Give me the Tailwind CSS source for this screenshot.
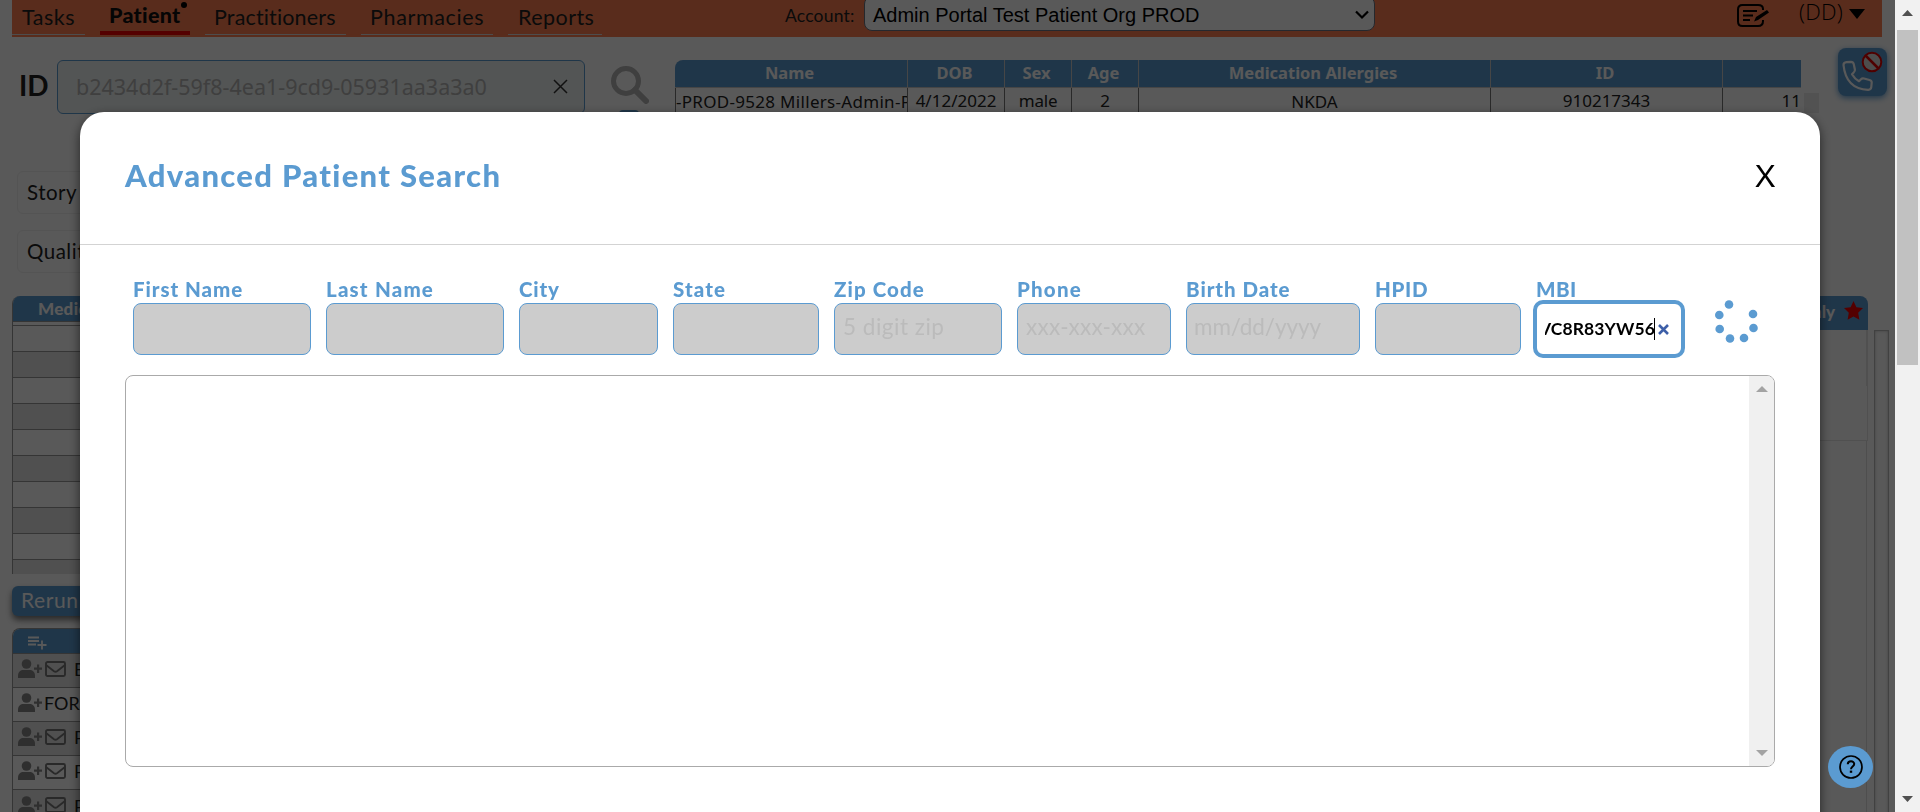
<!DOCTYPE html>
<html lang="en">
<head>
<meta charset="utf-8">
<title>Advanced Patient Search</title>
<script src="https://cdn.jsdelivr.net/npm/@tailwindcss/browser@4"></script>
</head>
<body class="relative h-[812px] w-[1920px] overflow-hidden bg-white font-['Lato',sans-serif] text-[#222] [font-variant-ligatures:none]">
<svg class="hidden">
  <symbol id="person" viewBox="0 0 24 20"><circle cx="8.5" cy="5" r="4.8"/><path d="M0 19v-2.500C0 13 2.500 11 5.500 11h6c3 0 5.500 2 5.500 5.500V19z"/><path d="M19 5.500h2.200v3.100h3v2.200h-3v3.100H19v-3.100h-3V8.600h3z"/></symbol>
  <symbol id="mail" viewBox="0 0 21 16"><rect x="1" y="1" width="19" height="14" rx="1.500" fill="none" stroke="currentColor" stroke-width="1.900"/><path d="M1 4l8 6.200q1.500 1 3 0L20 4" fill="none" stroke="currentColor" stroke-width="1.900"/></symbol>
</svg>

<div class="flex h-[812px] w-[1895px] flex-col overflow-hidden">
  <header class="ml-3 flex h-[37px] w-[1870px] shrink-0 items-start bg-[#ff7f50] text-[21.5px]">
    <nav class="flex h-[35px] gap-[15px] leading-[35px]">
      <a class="w-[73px] border-b border-[#ddd] pl-[10px] tracking-[0.5px]">Tasks</a>
      <a class="relative w-[90px] border-b-4 border-[#f00000] pl-[9px] text-[21.5px] font-black leading-[31px] tracking-[0.3px] text-[#111]">Patient<i class="absolute left-[81px] top-[2px] size-[6px] rounded-full bg-black"></i></a>
      <a class="w-[141px] border-b border-[#ddd] pl-[9px] tracking-[0.15px]">Practitioners</a>
      <a class="w-[132px] border-b border-[#ddd] pl-[9px] tracking-[0.65px]">Pharmacies</a>
      <a class="w-[94px] border-b border-[#ddd] pl-[10px] tracking-[0.45px]">Reports</a>
    </nav>
    <span class="ml-[183px] w-[79px] text-[17.5px] leading-[32px] tracking-[0.2px]">Account:</span>
    <div class="-mt-1 flex h-[35px] w-[511px] items-center justify-between rounded-lg border border-gray-500 bg-white pb-[1px] pl-[8px] pr-[5px] pt-1 font-['Liberation_Sans',sans-serif] text-[20px] text-black">
      <span>Admin Portal Test Patient Org PROD</span>
      <svg class="size-[14px]" viewBox="0 0 14 14" fill="none" stroke="currentColor" stroke-width="2.200"><path d="M1 3.500l6 6 6-6"/></svg>
    </div>
    <svg class="ml-[361px] mt-[3px] h-[25px] w-[34px] text-black" viewBox="0 0 34 25" fill="none" stroke="currentColor" stroke-width="2"><path d="M27 7V6q0-4-5-4H6.500Q2 2 2 6.500v12Q2 23 6.500 23H22q5 0 5-5v-1"/><path d="M7 8h14M7 12.500h10M7 17h7"/><path d="M18 18.500l2-4.500L31 7l2 2.500L22 17z" fill="currentColor" stroke="none"/></svg>
    <span class="ml-[29px] font-['Open_Sans',sans-serif] text-[22px] font-light leading-[22px] tracking-[0.2px] text-black">(DD)</span>
    <svg class="ml-[6px] mt-[9px] h-[10px] w-[16px] shrink-0 text-black" viewBox="0 0 16 10"><path d="M0 0h16L8 10z"/></svg>
  </header>

  <section class="mt-[11px] flex h-[123px] shrink-0 items-start">
    <b class="ml-[19px] mt-[11px] w-[38px] pt-[6px] text-[28px] leading-[40px]">ID</b>
    <div class="mt-[12px] flex h-[54px] w-[528px] items-center justify-between rounded-md border border-[#5b9bd1] bg-[#eef3f2] pl-[18px] pr-[16px] font-['Noto_Sans',sans-serif] text-[21.5px] text-[#b5b5b5]">
      <span>b2434d2f-59f8-4ea1-9cd9-05931aa3a3a0</span>
      <svg class="mb-[2px] size-[15px] text-[#333]" viewBox="0 0 15 15" stroke="currentColor" stroke-width="1.500"><path d="M1 1l13 13M14 1L1 14"/></svg>
    </div>
    <div class="ml-[24px] mt-[17px] flex w-[40px] flex-col items-center">
      <svg class="size-[39px]" viewBox="0 0 39 39" fill="none" stroke="#b4b4b4"><circle cx="16" cy="16" r="12.500" stroke-width="5"/><path d="M25 25l11 11" stroke-width="6" stroke-linecap="round"/></svg>
      <div class="mt-[6px] h-[10px] w-[20px] rounded-t bg-[#5b9bd1]"></div>
    </div>
    <div class="ml-[26px] mt-[12px] grid w-[1126px] grid-cols-[233px_97px_67px_67px_352px_232px_78px] overflow-hidden rounded-tl-lg text-center font-['Noto_Sans',sans-serif] text-[17px]">
      <div class="h-[28px] border-b border-r border-[#c8c8c8] bg-[#5b9bd1] pr-[3px] text-[16.500px] font-bold leading-[26px] text-white">Name</div>
      <div class="h-[28px] border-b border-r border-[#c8c8c8] bg-[#5b9bd1] pr-[3px] text-[16.500px] font-bold leading-[26px] text-white">DOB</div>
      <div class="h-[28px] border-b border-r border-[#c8c8c8] bg-[#5b9bd1] pr-[3px] text-[16.500px] font-bold leading-[26px] text-white">Sex</div>
      <div class="h-[28px] border-b border-r border-[#c8c8c8] bg-[#5b9bd1] pr-[3px] text-[16.500px] font-bold leading-[26px] text-white">Age</div>
      <div class="h-[28px] border-b border-r border-[#c8c8c8] bg-[#5b9bd1] pr-[3px] text-[16.500px] font-bold leading-[26px] text-white">Medication Allergies</div>
      <div class="h-[28px] border-b border-r border-[#c8c8c8] bg-[#5b9bd1] pr-[3px] text-[16.500px] font-bold leading-[26px] text-white">ID</div>
      <div class="h-[28px] border-b border-[#c8c8c8] bg-[#5b9bd1]"></div>
      <div class="h-[28px] overflow-hidden whitespace-nowrap border-x border-[#777] text-left leading-[27px] tracking-[0.300px]">-PROD-9528 Millers-Admin-P</div>
      <div class="h-[28px] border-r border-[#777] leading-[26px]">4/12/2022</div>
      <div class="h-[28px] border-r border-[#777] leading-[26px] tracking-[-0.2px]">male</div>
      <div class="h-[28px] border-r border-[#777] leading-[26px]">2</div>
      <div class="h-[28px] border-r border-[#777] leading-[27px]">NKDA</div>
      <div class="h-[28px] border-r border-[#777] leading-[26px]">910217343</div>
      <div class="h-[28px] text-right leading-[26px]">11</div>
    </div>
    <div class="ml-[3px] mt-[45px] h-[20px] w-[15px] bg-[#ebebeb]"></div>
    <div class="ml-[19px] flex h-[48px] w-[49px] shrink-0 rounded-lg bg-[#5b9bd1] shadow-[0_2px_6px_#5b9bd1]">
      <svg class="h-[48px] w-[49px]" viewBox="0 0 49 48" fill="none"><path d="M5.500 17q0-2.500 3-2.800l4.500-.4q2.200 0 2.700 2.200l1.200 5.500q.3 1.800-1.200 3l-1.700 1.700q2.500 4.500 7 7l2-2q1.200-1.200 3-.7l5.500 1.500q2.200.6 2.200 2.500l-.4 4.500q-.3 3-3.300 2.800Q8 41 5.500 17z" stroke="#fff" stroke-width="2.200" stroke-linejoin="round"/><circle cx="34" cy="14" r="9.300" fill="#ddd" stroke="#e00000" stroke-width="2"/><path d="M27.500 7.500l13 13" stroke="#e00000" stroke-width="2.500"/></svg>
    </div>
  </section>

  <main class="flex w-[1895px] grow justify-between">
    <div class="flex w-[300px] flex-col">
      <div class="ml-[17px] h-[43px] shrink-0 rounded-md border border-[#f0f0f0] pl-[9px] text-[20.500px] leading-[40px] tracking-[0.5px]">Story</div>
      <div class="ml-[17px] mt-4 h-[43px] shrink-0 rounded-md border border-[#f0f0f0] pl-[9px] text-[20.500px] leading-[40px] tracking-[0.5px]">Quality</div>
      <div class="ml-3 mt-[23px] flex h-[278px] shrink-0 flex-col overflow-hidden rounded-tl-lg border-l border-[#999]">
        <div class="h-[26px] shrink-0 border-b border-[#999] bg-[#5b9bd1] pl-[25px] text-[17px] font-black leading-[26px] tracking-[0.3px] text-white">Medications</div>
        <div class="h-1 shrink-0 border-b border-[#999]"></div>
        <div class="h-[26px] shrink-0 border-b border-[#999]"></div>
        <div class="h-[26px] shrink-0 border-b border-[#999] bg-[#e4e4e4]"></div>
        <div class="h-[26px] shrink-0 border-b border-[#999]"></div>
        <div class="h-[26px] shrink-0 border-b border-[#999] bg-[#e4e4e4]"></div>
        <div class="h-[26px] shrink-0 border-b border-[#999]"></div>
        <div class="h-[26px] shrink-0 border-b border-[#999] bg-[#e4e4e4]"></div>
        <div class="h-[26px] shrink-0 border-b border-[#999]"></div>
        <div class="h-[26px] shrink-0 border-b border-[#999] bg-[#e4e4e4]"></div>
        <div class="h-[26px] shrink-0 border-b border-[#999]"></div>
        <div class="h-[26px] shrink-0 bg-[#e4e4e4]"></div>
      </div>
      <div class="ml-3 mt-3 h-[30px] w-[180px] shrink-0 rounded-md bg-[#5b9bd1] pl-[9px] text-[21px] leading-[28px] tracking-[0.6px] text-white shadow-[0_4px_6px_#777]">Rerun</div>
      <div class="ml-3 mt-3 shrink-0 overflow-hidden rounded-tl-lg border-l border-t border-[#999] text-[18px] leading-[34px]">
        <div class="h-[25px] border-b border-[#999] bg-[#5b9bd1] pl-[15px] pt-[7px]"><svg class="h-[14px] w-[19px]" viewBox="0 0 19 14" stroke="#fff" stroke-width="1.800"><path d="M0 1.500h11M0 5h11M0 8.500h8M14 4.500v9M9.500 9h9"/></svg></div>
        <div class="flex h-[34px] items-center border-b border-[#999] bg-[#e4e4e4] pl-[5px]"><svg class="mt-[-3px] h-5 w-6 fill-[#888]"><use href="#person"/></svg><svg class="ml-[3px] mt-[-4px] h-4 w-[21px] text-[#777]"><use href="#mail"/></svg><span class="mb-[3px] ml-[8px]">Enroll</span></div>
        <div class="flex h-[34px] items-center border-b border-[#999] pl-[5px]"><svg class="mt-[-3px] h-5 w-6 fill-[#888]"><use href="#person"/></svg><span class="mb-[3px] ml-[2px]">FORM</span></div>
        <div class="flex h-[34px] items-center border-b border-[#999] bg-[#e4e4e4] pl-[5px]"><svg class="mt-[-3px] h-5 w-6 fill-[#888]"><use href="#person"/></svg><svg class="ml-[3px] mt-[-4px] h-4 w-[21px] text-[#777]"><use href="#mail"/></svg><span class="mb-[3px] ml-[8px]">Patient</span></div>
        <div class="flex h-[34px] items-center border-b border-[#999] pl-[5px]"><svg class="mt-[-3px] h-5 w-6 fill-[#888]"><use href="#person"/></svg><svg class="ml-[3px] mt-[-4px] h-4 w-[21px] text-[#777]"><use href="#mail"/></svg><span class="mb-[3px] ml-[8px]">Patient</span></div>
        <div class="flex h-[34px] items-center bg-[#e4e4e4] pl-[5px]"><svg class="mt-[-3px] h-5 w-6 fill-[#888]"><use href="#person"/></svg><svg class="ml-[3px] mt-[-4px] h-4 w-[21px] text-[#777]"><use href="#mail"/></svg><span class="mb-[3px] ml-[8px]">Patient</span></div>
      </div>
    </div>
    <div class="mr-[6px] mt-[125px] flex gap-[6px]">
      <div class="flex w-[168px] flex-col">
        <div class="flex h-[34px] items-center justify-end gap-[9px] rounded-tr-lg bg-[#5b9bd1] pr-[5px] text-[17px] font-black text-white"><span class="mb-[2px]">Only</span><svg class="mb-[5px] size-[19px]" viewBox="0 0 19 19" fill="#f00000"><path d="M9.500 0l2.900 6.200 6.600.9-4.800 4.700 1.200 6.900-5.900-3.300-5.900 3.300 1.200-6.900L0 7.100l6.600-.9z"/></svg></div>
        <div class="h-[56px] border-r-2 border-[#e4e4e4]"></div>
        <div class="h-[55px] border-b border-r border-[#e4e4e4]"></div>
        <div class="mr-px grow border-r border-[#e0e0e0]"></div>
      </div>
      <div class="mt-[34px] w-[15px] border-x border-t border-[#bbb] shadow-[inset_0_0_3px_#bbb]"></div>
    </div>
  </main>
</div>

<div class="fixed left-0 top-0 h-[812px] w-[1895px] bg-black/65"></div>

<div class="fixed left-[80px] top-[112px] flex h-[720px] w-[1740px] flex-col rounded-t-3xl bg-white shadow-[0_4px_12px_rgba(0,0,0,0.600)]">
  <div class="flex h-[133px] shrink-0 items-center justify-between border-b border-[#d3d3d3] px-[45px] pb-[5px]">
    <h1 class="text-[31px] font-black tracking-[1.320px] text-[#5b9bd1]">Advanced Patient Search</h1>
    <span class="origin-right scale-x-110 font-['Noto_Sans',sans-serif] text-[31px] text-black">X</span>
  </div>
  <div class="flex h-[130px] shrink-0 pl-[53px] pt-[33px] text-[20.500px] tracking-[0.300px] text-[#5b9bd1]">
    <div class="mr-[15px] w-[178px]"><b class="block h-[25px] font-black leading-[22px] tracking-[0.950px]">First Name</b><div class="h-[52px] rounded-lg border border-[#5b9bd1] bg-[#ccc]"></div></div>
    <div class="mr-[15px] w-[178px]"><b class="block h-[25px] font-black leading-[22px] tracking-[1.200px]">Last Name</b><div class="h-[52px] rounded-lg border border-[#5b9bd1] bg-[#ccc]"></div></div>
    <div class="mr-[15px] w-[139px]"><b class="block h-[25px] font-black leading-[22px] tracking-[0.800px]">City</b><div class="h-[52px] rounded-lg border border-[#5b9bd1] bg-[#ccc]"></div></div>
    <div class="mr-[15px] w-[146px]"><b class="block h-[25px] font-black leading-[22px] tracking-[1.100px]">State</b><div class="h-[52px] rounded-lg border border-[#5b9bd1] bg-[#ccc]"></div></div>
    <div class="mr-[15px] w-[168px]"><b class="block h-[25px] font-black leading-[22px] tracking-[1.100px]">Zip Code</b><div class="h-[52px] rounded-lg border border-[#5b9bd1] bg-[#ccc] pl-[8px] text-[22.500px] leading-[46px] tracking-[0.500px] text-[#bbb]">5 digit zip</div></div>
    <div class="mr-[15px] w-[154px]"><b class="block h-[25px] font-black leading-[22px] tracking-[1.200px]">Phone</b><div class="h-[52px] rounded-lg border border-[#5b9bd1] bg-[#ccc] pl-[8px] text-[22.500px] leading-[46px] text-[#bbb]">xxx-xxx-xxx</div></div>
    <div class="mr-[15px] w-[174px]"><b class="block h-[25px] font-black leading-[22px] tracking-[0.950px]">Birth Date</b><div class="h-[52px] rounded-lg border border-[#5b9bd1] bg-[#ccc] pl-[7px] text-[22.500px] leading-[46px] tracking-[-0.100px] text-[#bbb]">mm/dd/yyyy</div></div>
    <div class="mr-[12px] w-[146px]"><b class="block h-[25px] font-black leading-[22px] tracking-[0.700px]">HPID</b><div class="h-[52px] rounded-lg border border-[#5b9bd1] bg-[#ccc]"></div></div>
    <div class="w-[152px]"><b class="block h-[22px] pl-[3px] font-black leading-[22px] tracking-[0.400px]">MBI</b>
      <div class="flex h-[58px] items-center rounded-[10px] border-4 border-[#5b9bd1] bg-white pl-[8px]">
        <div class="flex w-[110px] justify-end overflow-hidden whitespace-nowrap text-[17.500px] font-bold tracking-[0.100px] text-black"><span>VC8R83YW56</span></div>
        <i class="-ml-px h-[22px] w-px bg-black"></i>
        <svg class="ml-[3px] mt-px size-[11px]" viewBox="0 0 11 11" stroke="#3d5fa8" stroke-width="2.600"><path d="M1 1l9 9M10 1l-9 9"/></svg>
      </div>
    </div>
    <svg class="ml-[29px] mt-[20px] h-[48px] w-[46px] fill-[#5b9bd1]" viewBox="0 0 46 48"><circle cx="15" cy="6.500" r="4.300"/><circle cx="5.300" cy="17" r="4.300"/><circle cx="5.700" cy="31" r="4.300"/><circle cx="16" cy="40.500" r="4.300"/><circle cx="30" cy="40" r="4.300"/><circle cx="39.500" cy="30" r="4.300"/><circle cx="39" cy="16" r="4.300"/></svg>
  </div>
  <div class="mx-[45px] flex h-[392px] shrink-0 justify-end overflow-hidden rounded-lg border border-[#aaa]">
    <div class="flex w-[25px] flex-col items-center justify-between bg-[#f0f0f0] py-[10px]">
      <svg class="h-[6px] w-[12px] fill-[#a3a3a3]" viewBox="0 0 12 6"><path d="M6 0l6 6H0z"/></svg>
      <svg class="h-[6px] w-[12px] fill-[#a3a3a3]" viewBox="0 0 12 6"><path d="M0 0h12L6 6z"/></svg>
    </div>
  </div>
</div>

<div class="fixed left-[1828px] top-[746px] flex h-[42px] w-[45px] items-center justify-center rounded-[50%] bg-[#5b9bd1]">
  <svg class="size-[24px]" viewBox="0 0 24 24" fill="none" stroke="#000" stroke-width="1.700"><circle cx="12" cy="12" r="11"/><path d="M8.800 9.300c0-4 6.400-3.900 6.400-.2 0 2.500-3.200 2.400-3.200 5.100" stroke-width="2"/><path d="M12 15.600v2.200" stroke-width="2.400"/></svg>
</div>

<div class="fixed left-[1895px] top-0 flex h-[812px] w-[25px] flex-col items-center bg-[#f1f1f1] pt-[10px]">
  <svg class="h-[6px] w-[11px] fill-[#505050]" viewBox="0 0 11 6"><path d="M5.500 0L11 6H0z"/></svg>
  <div class="mt-[14px] h-[335px] w-[21px] bg-[#c1c1c1]"></div>
  <svg class="mb-[10px] mt-auto h-[6px] w-[11px] fill-[#505050]" viewBox="0 0 11 6"><path d="M0 0h11L5.500 6z"/></svg>
</div>
</body>
</html>
